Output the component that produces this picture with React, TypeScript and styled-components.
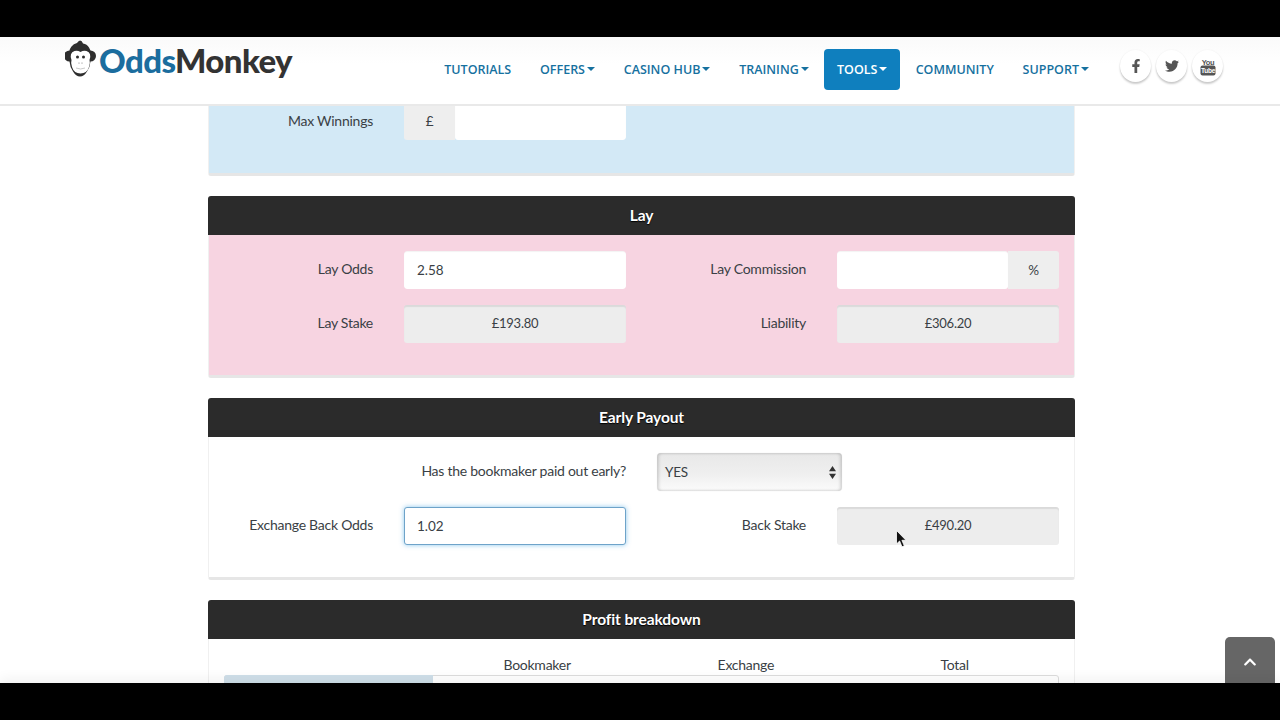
import React from "react";
import styled, { createGlobalStyle } from "styled-components";
import { FaChevronUp, FaFacebookF, FaTwitter } from "react-icons/fa";

const GlobalStyle = createGlobalStyle`
  html, body {
    margin: 0;
    padding: 0;
    background: #000;
  }
  * {
    box-sizing: border-box;
  }
`;

const Screen = styled.div`
  width: 1280px;
  height: 720px;
  display: flex;
  flex-direction: column;
  overflow: hidden;
  background: #000;
  font-family: "Lato", "Liberation Sans", sans-serif;
  font-size: 14px;
  letter-spacing: -0.25px;
  color: #3a3f45;
`;

const Letterbox = styled.div`
  height: 37px;
  flex: none;
  background: #000;
`;

const BottomLetterbox = styled(Letterbox)`
  position: relative;
  box-shadow: 0 -5px 12px rgba(0, 0, 0, 0.05);
`;

const Viewport = styled.div`
  position: relative;
  height: 646px;
  flex: none;
  display: flex;
  flex-direction: column;
  overflow: hidden;
  background: #fff;
`;

const Header = styled.header`
  position: relative;
  z-index: 2;
  flex: none;
  height: 69px;
  display: flex;
  align-items: flex-start;
  padding: 0 57px 0 65px;
  background: linear-gradient(#fafafa, #fff 40%);
  border-bottom: 2px solid #e9e9e9;
`;

const Logo = styled.a`
  display: flex;
  align-items: flex-start;
  gap: 2px;
  padding-top: 3px;
`;

const LogoText = styled.span`
  font-family: "Lato", sans-serif;
  font-weight: 900;
  font-size: 33px;
  line-height: 40px;
  letter-spacing: -0.6px;
  color: #333;
`;

const LogoBlue = styled.span`
  color: #1b6d9e;
`;

const NavList = styled.nav`
  margin-left: auto;
  display: flex;
  gap: 0.75px;
  padding-top: 12px;
`;

const NavItem = styled.a<{ $active?: boolean }>`
  height: 41px;
  display: flex;
  align-items: center;
  gap: 2px;
  padding: 0 ${(p) => (p.$active ? "13px" : "14px")};
  margin: 0 ${(p) => (p.$active ? "0.5px" : "0")};
  border-radius: 4px;
  background: ${(p) => (p.$active ? "#0f7fbe" : "transparent")};
  color: ${(p) => (p.$active ? "#fff" : "#16719f")};
  font-family: "Open Sans", sans-serif;
  font-weight: 600;
  font-size: 12.500px;
  letter-spacing: 0;
`;

const Caret = styled.span`
  width: 0;
  height: 0;
  margin-bottom: 1px;
  border-left: 4px solid transparent;
  border-right: 4px solid transparent;
  border-top: 4px solid currentColor;
`;

const SocialList = styled.div`
  display: flex;
  gap: 5px;
  margin-left: 17px;
  padding-top: 13px;
`;

const SocialButton = styled.a`
  width: 31px;
  height: 32px;
  display: flex;
  align-items: center;
  justify-content: center;
  border-radius: 50%;
  background: #fff;
  color: #555;
  font-size: 14px;
  box-shadow: 0 2px 2px rgba(0, 0, 0, 0.2), 0 0 2px rgba(0, 0, 0, 0.06);
`;

const Content = styled.main`
  flex: 1;
  min-height: 0;
  width: 867px;
  margin-left: 208px;
  margin-top: -4px;
  display: flex;
  flex-direction: column;
  gap: 20px;
`;

const Panel = styled.section``;

const PanelTitle = styled.h2`
  margin: 0;
  height: 39px;
  display: flex;
  align-items: center;
  justify-content: center;
  padding-bottom: 2px;
  border-radius: 3px 3px 0 0;
  background: #2b2b2b;
  color: #fff;
  font-size: 15.500px;
  font-weight: 700;
  letter-spacing: -0.1px;
  text-shadow: 0 1px 1px #000;
`;

const PanelBody = styled.div<{ $tint?: string }>`
  display: grid;
  grid-template-columns: 149px 1fr 149px 1fr;
  column-gap: 31px;
  row-gap: 16px;
  padding: 16px 15px 32px;
  background: ${(p) => p.$tint ?? "#fff"};
  border: 1px solid #f0f0f0;
  border-top: 0;
  border-bottom: 3px solid #e6e6e6;
  border-radius: 0 0 3px 3px;
`;

const FirstPanelBody = styled(PanelBody)`
  padding-top: 0;
  padding-bottom: 33px;
`;

const Label = styled.label<{ $wide?: boolean }>`
  grid-column: ${(p) => (p.$wide ? "span 2" : "auto")};
  align-self: center;
  text-align: right;
  margin-top: -3px;
  white-space: nowrap;
`;

const ClippedLabel = styled(Label)`
  margin-top: -1px;
`;

const InputGroup = styled.div`
  display: flex;
  height: 38px;
  border-radius: 3px;
  overflow: hidden;
`;

const Addon = styled.span`
  width: 51px;
  flex: none;
  display: flex;
  align-items: center;
  justify-content: center;
  background: #eee;
  font-size: 13.500px;
`;

const TextInput = styled.input`
  flex: 1;
  min-width: 0;
  height: 38px;
  padding: 0 13px 1px;
  border: 0;
  border-radius: 3px;
  outline: 0;
  background: #fff;
  color: #3a3f45;
  font: inherit;
  font-size: 13.500px;
  box-shadow: inset 0 1px 1px rgba(0, 0, 0, 0.05);
`;

const FocusedInput = styled(TextInput)`
  width: 100%;
  padding-left: 12px;
  border: 1px solid #6ea3c9;
  box-shadow: 0 0 5px rgba(90, 175, 230, 0.7);
`;

const Result = styled.output`
  height: 38px;
  display: flex;
  align-items: center;
  justify-content: center;
  padding-bottom: 3px;
  border-radius: 3px;
  background: #ededed;
  box-shadow: inset 0 2px 1px rgba(0, 0, 0, 0.08);
  font-size: 13px;
`;

const Select = styled.div`
  width: 185px;
  height: 38px;
  display: flex;
  align-items: center;
  justify-content: space-between;
  padding: 0 6px 0 8px;
  border-radius: 4px;
  background: linear-gradient(#e8e8e8, #efefef 55%, #fbfbfb);
  box-shadow: inset 2px 0 3px rgba(0, 0, 0, 0.14), inset -2px 0 3px rgba(0, 0, 0, 0.14), 0 0 1px rgba(0, 0, 0, 0.15);
  font-size: 13.500px;
`;

const Spacer = styled.span`
  grid-column: span 1;
`;

const BreakdownBody = styled.div`
  height: 50px;
  padding: 0 15px;
  background: #fff;
  border: 1px solid #f0f0f0;
  border-top: 0;
`;

const BreakdownHead = styled.div`
  display: grid;
  grid-template-columns: repeat(4, 1fr);
  height: 36px;
  padding-top: 17px;
  line-height: 18px;
  text-align: center;
`;

const BreakdownRow = styled.div`
  display: grid;
  grid-template-columns: repeat(4, 1fr);
  height: 14px;
  border: 1px solid #ddd;
  border-radius: 3px 3px 0 0;
`;

const BreakdownLabelCell = styled.div`
  background: #cfdfe9;
  margin: -1px 0 0 -1px;
  border-radius: 3px 0 0 0;
`;

const BackToTop = styled.a`
  position: absolute;
  right: 5px;
  bottom: 0;
  width: 50px;
  height: 46px;
  display: flex;
  align-items: center;
  justify-content: center;
  padding-top: 4px;
  border-radius: 5px 5px 0 0;
  background: #666;
  color: #fff;
  font-size: 14px;
`;

const Pointer = styled.svg`
  position: absolute;
  left: 896px;
  top: 493px;
  width: 11px;
  height: 18px;
`;

const MonkeyLogo = () => (
  <svg width="32" height="37" viewBox="0 0 32 37">
    <path d="M15 0.5 q2 0 3 3 q4 0.5 6 4 q1 2 1.5 3 a5.5 5.5 0 0 1 0 11 q-0.5 6 -3.5 10 q-3 5 -7 5 q-4 0 -7 -5 q-3 -4 -3.5 -10 a5.5 5.5 0 0 1 0 -11 q0.5 -2 2 -4 q2 -3 5.5 -3.5 q1 -2 3 -2.5z" fill="#2e2e2e" />
    <path d="M6.5 20 q-2.5 -7 3 -9 q3 -1 6 1 q3 -2 6 -1 q5.5 2 3 9 q1 3 -0.5 7 q-2 6.500 -8.500 6.500 q-6.500 0 -8.500 -6.500 q-1.500 -4 -0.500 -7z" fill="#fff" />
    <circle cx="12.500" cy="17" r="1.500" fill="#2e2e2e" />
    <circle cx="18.500" cy="17" r="1.500" fill="#2e2e2e" />
    <circle cx="14" cy="23" r="0.600" fill="#777" />
    <circle cx="17" cy="23" r="0.600" fill="#777" />
    <path d="M11 28 q4.500 2 9 0" stroke="#bbb" strokeWidth="0.800" fill="none" />
  </svg>
);

// the old stacked "You / Tube" mark, no icon package has this one
const YoutubeMark = () => (
  <svg width="16" height="19" viewBox="0 0 16 19">
    <text x="8" y="7.500" textAnchor="middle" fontFamily="Liberation Sans" fontWeight="700" fontSize="7.500" letterSpacing="-0.3" fill="#555">
      You
    </text>
    <rect x="0.500" y="8.500" width="15" height="10" rx="2" fill="#555" />
    <text x="8" y="16" textAnchor="middle" fontFamily="Liberation Sans" fontWeight="700" fontSize="6.500" letterSpacing="-0.2" fill="#fff">
      Tube
    </text>
  </svg>
);

const SelectArrows = () => (
  <svg width="7" height="13" viewBox="0 0 7 13">
    <path d="M3.500 0 L7 5.300 H0z M3.500 13 L0 7.700 H7z" fill="#333" />
  </svg>
);

const navItems = [
  { label: "TUTORIALS" },
  { label: "OFFERS", caret: true },
  { label: "CASINO HUB", caret: true },
  { label: "TRAINING", caret: true },
  { label: "TOOLS", caret: true, active: true },
  { label: "COMMUNITY" },
  { label: "SUPPORT", caret: true },
];

export default function App() {
  return (
    <Screen>
      <GlobalStyle />
      <Letterbox />
      <Viewport>
        <Header>
          <Logo>
            <MonkeyLogo />
            <LogoText>
              <LogoBlue>Odds</LogoBlue>Monkey
            </LogoText>
          </Logo>
          <NavList>
            {navItems.map((item) => (
              <NavItem key={item.label} $active={item.active}>
                {item.label}
                {item.caret && <Caret />}
              </NavItem>
            ))}
          </NavList>
          <SocialList>
            <SocialButton>
              <FaFacebookF />
            </SocialButton>
            <SocialButton>
              <FaTwitter />
            </SocialButton>
            <SocialButton>
              <YoutubeMark />
            </SocialButton>
          </SocialList>
        </Header>
        <Content>
          <Panel>
            <FirstPanelBody $tint="#d3e9f6">
              <ClippedLabel>Max Winnings</ClippedLabel>
              <InputGroup>
                <Addon>£</Addon>
                <TextInput readOnly />
              </InputGroup>
            </FirstPanelBody>
          </Panel>
          <Panel>
            <PanelTitle>Lay</PanelTitle>
            <PanelBody $tint="#f7d4e1">
              <Label>Lay Odds</Label>
              <InputGroup>
                <TextInput readOnly defaultValue="2.58" />
              </InputGroup>
              <Label>Lay Commission</Label>
              <InputGroup>
                <TextInput readOnly />
                <Addon>%</Addon>
              </InputGroup>
              <Label>Lay Stake</Label>
              <Result>£193.80</Result>
              <Label>Liability</Label>
              <Result>£306.20</Result>
            </PanelBody>
          </Panel>
          <Panel>
            <PanelTitle>Early Payout</PanelTitle>
            <PanelBody>
              <Label $wide>Has the bookmaker paid out early?</Label>
              <Select>
                YES
                <SelectArrows />
              </Select>
              <Spacer />
              <Label>Exchange Back Odds</Label>
              <FocusedInput readOnly defaultValue="1.02" />
              <Label>Back Stake</Label>
              <Result>£490.20</Result>
            </PanelBody>
          </Panel>
          <Panel>
            <PanelTitle>Profit breakdown</PanelTitle>
            <BreakdownBody>
              <BreakdownHead>
                <span />
                <span>Bookmaker</span>
                <span>Exchange</span>
                <span>Total</span>
              </BreakdownHead>
              <BreakdownRow>
                <BreakdownLabelCell />
              </BreakdownRow>
            </BreakdownBody>
          </Panel>
        </Content>
        <BackToTop>
          <FaChevronUp />
        </BackToTop>
        <Pointer viewBox="0 0 11 18">
          <path d="M0.500 0.500 V14 L3.600 11 L6 16.800 L8.300 15.800 L5.900 10.300 H10z" fill="#111" stroke="#fff" strokeWidth="0.800" />
        </Pointer>
      </Viewport>
      <BottomLetterbox />
    </Screen>
  );
}
